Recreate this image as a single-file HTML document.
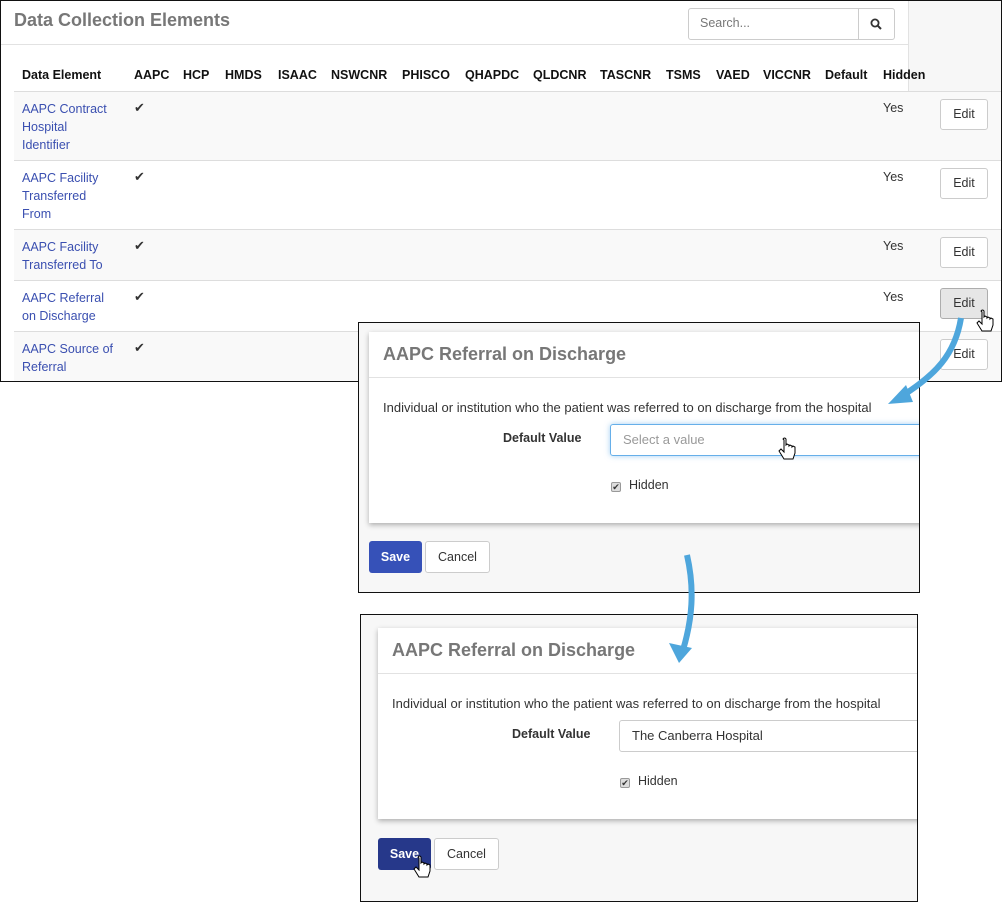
<!DOCTYPE html>
<html><head><style>
*{box-sizing:border-box;margin:0;padding:0}
body{width:1008px;height:906px;background:#fff;font-family:"Liberation Sans",sans-serif;font-size:13px;color:#333;position:relative;overflow:hidden}
.abs{position:absolute}
.p1{left:0;top:0;width:1002px;height:382px;border:1px solid #111;background:#f7f7f7;overflow:hidden}
.main{left:-1px;top:-1px;width:909px;height:382px;background:#fff;border-right:1px solid #e2e2e2}
h1{position:absolute;font-size:18px;font-weight:bold;color:#777}
.th{position:absolute;top:67px;font-weight:bold;color:#111;font-size:12.5px}
.row{position:absolute;left:13px;width:988px;border-top:1px solid #ddd}
.lnk{position:absolute;left:8px;color:#3a4fb0;line-height:18px;font-size:12.5px}
.chk{position:absolute;left:120px;font-size:13px;color:#333}
.yes{position:absolute;left:869px;font-size:12.5px}
.btn{position:absolute;border:1px solid #ccc;border-radius:3px;background:#fff;text-align:center;font-size:12.5px;color:#333}
.edit{left:926px;width:48px;height:31px;line-height:29px}
.panel{border:1px solid #111;background:#f7f7f7;overflow:hidden}
.card{position:absolute;background:#fff;box-shadow:0 2px 5px rgba(0,0,0,.3)}
.card h2{position:absolute;left:14px;top:12px;font-size:18px;color:#777;font-weight:bold}
.card .hr{position:absolute;left:0;right:0;top:45px;border-top:1px solid #e2e2e2}
.desc{position:absolute;left:14px;top:68px;font-size:13px;color:#333;white-space:nowrap}
.dv{position:absolute;left:134px;top:99px;font-weight:bold;font-size:12.5px;color:#333}
.inp{position:absolute;left:241px;top:92px;right:-2px;height:32px;border:1px solid #ccc;border-radius:3px;padding:7px 12px;font-size:13px}
.hid{position:absolute;left:242px;top:146px;font-size:12.5px}
.cb{display:inline-block;width:10px;height:10px;border:1px solid #999;border-radius:2px;background:#ddd;font-size:9px;line-height:8px;text-align:center;margin-right:8px;vertical-align:-1px}
.save{color:#fff;border:none;font-weight:bold;height:32px;line-height:32px;width:53px}
.cancel{height:32px;line-height:30px;width:65px}
</style></head><body>
<div class="abs p1">
 <div class="abs main">
  <h1 style="left:14px;top:10px">Data Collection Elements</h1>
  <div class="abs" style="left:688px;top:8px;width:207px;height:32px;border:1px solid #ccc;border-radius:3px"></div>
  <div class="abs" style="left:858px;top:8px;width:1px;height:32px;background:#ccc"></div>
  <div class="abs" style="left:700px;top:16px;color:#777;font-size:12.5px">Search...</div>
  <svg class="abs" style="left:870px;top:18px" width="12" height="12" viewBox="0 0 12 12"><circle cx="5" cy="5" r="3.6" stroke="#333" stroke-width="1.8" fill="none"/><line x1="7.6" y1="7.6" x2="11" y2="11" stroke="#333" stroke-width="2"/></svg>
  <div class="abs" style="left:0;top:44px;width:908px;border-top:1px solid #e2e2e2"></div>
 </div>
 <div class="th" style="left:21px">Data Element</div>
 <div class="th" style="left:133px">AAPC</div>
 <div class="th" style="left:182px">HCP</div>
 <div class="th" style="left:224px">HMDS</div>
 <div class="th" style="left:277px">ISAAC</div>
 <div class="th" style="left:330px">NSWCNR</div>
 <div class="th" style="left:401px">PHISCO</div>
 <div class="th" style="left:464px">QHAPDC</div>
 <div class="th" style="left:532px">QLDCNR</div>
 <div class="th" style="left:599px">TASCNR</div>
 <div class="th" style="left:665px">TSMS</div>
 <div class="th" style="left:715px">VAED</div>
 <div class="th" style="left:762px">VICCNR</div>
 <div class="th" style="left:824px">Default</div>
 <div class="th" style="left:882px">Hidden</div>

 <div class="row" style="top:90px;height:69px;background:#f9f9f9"><div class="lnk" style="top:8px">AAPC Contract<br>Hospital<br>Identifier</div><div class="chk" style="top:8px">✔</div><div class="yes" style="top:9px">Yes</div><div class="btn edit" style="top:7px">Edit</div></div>
 <div class="row" style="top:159px;height:69px;background:#fff"><div class="lnk" style="top:8px">AAPC Facility<br>Transferred<br>From</div><div class="chk" style="top:8px">✔</div><div class="yes" style="top:9px">Yes</div><div class="btn edit" style="top:7px">Edit</div></div>
 <div class="row" style="top:228px;height:51px;background:#f9f9f9"><div class="lnk" style="top:8px">AAPC Facility<br>Transferred To</div><div class="chk" style="top:8px">✔</div><div class="yes" style="top:9px">Yes</div><div class="btn edit" style="top:7px">Edit</div></div>
 <div class="row" style="top:279px;height:51px;background:#fff"><div class="lnk" style="top:8px">AAPC Referral<br>on Discharge</div><div class="chk" style="top:8px">✔</div><div class="yes" style="top:9px">Yes</div><div class="btn edit" style="top:7px;background:#e6e6e6;border-color:#adadad">Edit</div></div>
 <div class="row" style="top:330px;height:51px;background:#f9f9f9"><div class="lnk" style="top:8px">AAPC Source of<br>Referral</div><div class="chk" style="top:8px">✔</div><div class="btn edit" style="top:7px">Edit</div></div>
</div>

<div class="abs panel" style="left:358px;top:322px;width:562px;height:271px">
 <div class="card" style="left:10px;top:9px;width:560px;height:191px">
  <h2>AAPC Referral on Discharge</h2><div class="hr"></div>
  <div class="desc">Individual or institution who the patient was referred to on discharge from the hospital</div>
  <div class="dv">Default Value</div>
  <div class="inp" style="border-color:#66afe9;box-shadow:0 0 6px rgba(102,175,233,.6);color:#999">Select a value</div>
  <div class="hid"><span class="cb">✔</span>Hidden</div>
 </div>
 <div class="btn save" style="left:10px;top:218px;background:#3651b8">Save</div>
 <div class="btn cancel" style="left:66px;top:218px">Cancel</div>
</div>

<div class="abs panel" style="left:360px;top:614px;width:558px;height:288px">
 <div class="card" style="left:17px;top:13px;width:560px;height:191px">
  <h2>AAPC Referral on Discharge</h2><div class="hr"></div>
  <div class="desc">Individual or institution who the patient was referred to on discharge from the hospital</div>
  <div class="dv">Default Value</div>
  <div class="inp" style="color:#333">The Canberra Hospital</div>
  <div class="hid"><span class="cb">✔</span>Hidden</div>
 </div>
 <div class="btn save" style="left:17px;top:223px;background:#26388a">Save</div>
 <div class="btn cancel" style="left:73px;top:223px">Cancel</div>
</div>

<svg class="abs" style="left:0;top:0" width="1008" height="906">
 <path d="M961 318 C955 355 935 375 902 396" stroke="#4ea6dc" stroke-width="6" fill="none"/>
 <polygon points="888,404 906,385 913,402" fill="#4ea6dc"/>
 <path d="M687 555 C695 590 692 620 683 650" stroke="#4ea6dc" stroke-width="6" fill="none"/>
 <polygon points="679,663 669,643 692,648" fill="#4ea6dc"/>
 <g stroke="#000" stroke-width="1" fill="#fff">
  <path d="M982 312 v12 l-3 -3 l-2 2 l5 8 h9 l2 -6 v-6 l-2 -1 l-1 1 v-1 l-2 -1 l-1 1 v-1 l-2 -1 l-1 1 v-6 q-1.5 -2 -3 0z"/>
  <path d="M784 440 v12 l-3 -3 l-2 2 l5 8 h9 l2 -6 v-6 l-2 -1 l-1 1 v-1 l-2 -1 l-1 1 v-1 l-2 -1 l-1 1 v-6 q-1.5 -2 -3 0z"/>
  <path d="M419 858 v12 l-3 -3 l-2 2 l5 8 h9 l2 -6 v-6 l-2 -1 l-1 1 v-1 l-2 -1 l-1 1 v-1 l-2 -1 l-1 1 v-6 q-1.5 -2 -3 0z"/>
 </g>
</svg>
</body></html>
